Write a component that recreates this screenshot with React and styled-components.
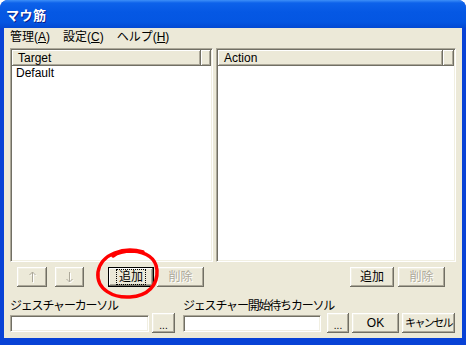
import React from 'react';
import styled, { createGlobalStyle, css } from 'styled-components';

const Global = createGlobalStyle`
  html, body { margin: 0; padding: 0; background: #fff; }
  body {
    width: 466px; height: 345px; overflow: hidden;
    font-family: "Liberation Sans", "Noto Sans CJK JP", sans-serif;
    font-size: 12px; color: #000;
  }
`;

const Window = styled.div`
  position: relative;
  width: 466px;
  height: 345px;
  display: flex;
  flex-direction: column;
  background: #0842d6;
  border-radius: 8px 8px 0 0;
  overflow: hidden;
`;

const TitleBar = styled.div`
  height: 28px;
  flex: none;
  display: flex;
  align-items: center;
  padding-left: 6px;
  background: linear-gradient(to bottom, #3d8ff8 0px, #0d62ea 3px, #0558e4 12px, #0456e2 22px, #0349d3 28px);
  color: #fff;
  font-weight: bold;
  font-size: 13px;
  text-shadow: 1px 1px 0 #0a1e8a;
  font-family: "Noto Sans CJK JP", sans-serif;
  letter-spacing: 0.5px;
`;

const Body = styled.div`
  flex: 1;
  margin: 0 4px 7px 4px;
  background: #ece9d8;
  display: flex;
  flex-direction: column;
  padding: 0 6px 5px 6px;
`;

const MenuBar = styled.div`
  height: 18px;
  display: flex;
  align-items: center;
  margin-left: -6px;
`;

const MenuItem = styled.span`
  padding: 0 7px 0 6px;
  line-height: 18px;
  u { text-decoration: underline; }
`;

const Panes = styled.div`
  margin-top: 2px;
  height: 214px;
  display: grid;
  grid-template-columns: 203px 240px;
  column-gap: 3px;
`;

const ListBox = styled.div`
  background: #fff;
  border-style: solid;
  border-width: 1px;
  border-color: #aca899 #fff #fff #aca899;
  box-shadow: inset 1px 1px #716f64, inset -1px -1px #f1efe2;
  padding: 1px;
  display: flex;
  flex-direction: column;
`;

const Header = styled.div`
  display: flex;
  height: 16px;
  flex: none;
`;

const HeaderCell = styled.div`
  ${({ $w }) => ($w ? css`width: ${$w}px;` : css`flex: 1;`)}
  background: #ece9d8;
  box-shadow: inset -1px -1px #716f64, inset 1px 1px #fff, inset -2px -2px #aca899;
  padding-left: 6px;
  line-height: 16px;
`;

const Row = styled.div`
  height: 14px;
  line-height: 14px;
  padding-left: 4px;
`;

const ButtonRow = styled.div`
  margin-top: 5px;
  height: 20px;
  display: grid;
  grid-template-columns: 203px 240px;
  column-gap: 3px;
`;

const BtnGroup = styled.div`
  display: flex;
  justify-content: ${({ $end }) => ($end ? 'flex-end' : 'flex-start')};
  padding-right: ${({ $end }) => ($end ? '11px' : '0')};
`;

const Button = styled.div`
  width: ${({ $w }) => $w}px;
  height: ${({ $h }) => $h || 20}px;
  margin-left: ${({ $ml }) => $ml || 0}px;
  flex: none;
  box-sizing: border-box;
  background: #ece9d8;
  display: flex;
  align-items: center;
  justify-content: center;
  white-space: nowrap;
  box-shadow: inset -1px -1px #716f64, inset 1px 1px #fff, inset -2px -2px #aca899, inset 2px 2px #f1efe2;
  line-height: 1;
  ${({ $disabled }) =>
    $disabled &&
    css`
      color: #aca899;
      text-shadow: 1px 1px 0 #fff;
    `}
  ${({ $focused }) =>
    $focused &&
    css`
      box-shadow: inset 0 0 0 1px #000, inset -2px -2px #716f64, inset 2px 2px #fff, inset -3px -3px #aca899;
    `}
`;

const ArrowSvg = styled.svg`
  display: block;
  overflow: visible;
`;

function Arrow({ down }) {
  const d = down ? 'M4.5 1 V11 M1.5 8 L4.5 11 L7.5 8' : 'M4.5 1 V11 M1.5 4 L4.5 1 L7.5 4';
  return (
    <ArrowSvg width="9" height="12" viewBox="0 0 9 12">
      <path d={d} transform="translate(1 1)" fill="none" stroke="#fff" strokeWidth="1" />
      <path d={d} fill="none" stroke="#aca899" strokeWidth="1" />
    </ArrowSvg>
  );
}

const FocusRect = styled.span`
  border: 1px dotted #000;
  padding: 1px 2px;
  line-height: 12px;
`;

const Dots = styled.span`
  font-size: 10px;
  margin-top: 6px;
  letter-spacing: 0;
`;

const Bottom = styled.div`
  margin-top: 13px;
  display: flex;
  align-items: flex-end;
`;

const Field = styled.div`
  display: flex;
  flex-direction: column;
  margin-right: ${({ $mr }) => $mr}px;
`;

const Label = styled.div`
  height: 13px;
  line-height: 13px;
  white-space: nowrap;
  letter-spacing: -1.2px;
`;

const Controls = styled.div`
  display: flex;
  align-items: center;
  height: 20px;
  gap: ${({ $gap }) => $gap}px;
`;

const Input = styled.div`
  width: ${({ $w }) => $w}px;
  height: 17px;
  box-sizing: border-box;
  background: #fff;
  border-style: solid;
  border-width: 1px;
  border-color: #aca899 #fff #fff #aca899;
  box-shadow: inset 1px 1px #716f64, inset -1px -1px #f1efe2;
`;

const Overlay = styled.svg`
  position: absolute;
  left: 0;
  top: 0;
  pointer-events: none;
`;

const Kana = styled.span`
  font-size: 11px;
  letter-spacing: -1.6px;
`;

export default function App() {
  return (
    <>
      <Global />
      <Window>
        <TitleBar>マウ筋</TitleBar>
        <Body>
          <MenuBar>
            <MenuItem>管理(<u>A</u>)</MenuItem>
            <MenuItem>設定(<u>C</u>)</MenuItem>
            <MenuItem>ヘルプ(<u>H</u>)</MenuItem>
          </MenuBar>
          <Panes>
            <ListBox>
              <Header>
                <HeaderCell $w={183}>Target</HeaderCell>
                <HeaderCell />
              </Header>
              <Row>Default</Row>
            </ListBox>
            <ListBox>
              <Header>
                <HeaderCell $w={219}>Action</HeaderCell>
                <HeaderCell />
              </Header>
            </ListBox>
          </Panes>
          <ButtonRow>
            <BtnGroup>
              <Button $w={30} $ml={7} $disabled><Arrow /></Button>
              <Button $w={29} $ml={8} $disabled><Arrow down /></Button>
              <Button $w={46} $ml={24} $focused><FocusRect>追加</FocusRect></Button>
              <Button $w={47} $ml={3} $disabled>削除</Button>
            </BtnGroup>
            <BtnGroup $end>
              <Button $w={44}>追加</Button>
              <Button $w={47} $ml={4} $disabled>削除</Button>
            </BtnGroup>
          </ButtonRow>
          <Bottom>
            <Field $mr={8}>
              <Label>ジェスチャーカーソル</Label>
              <Controls $gap={3}>
                <Input $w={139} />
                <Button $w={23}><Dots>...</Dots></Button>
              </Controls>
            </Field>
            <Field $mr={3}>
              <Label>ジェスチャー開始待ちカーソル</Label>
              <Controls $gap={6}>
                <Input $w={138} />
                <Button $w={22}><Dots>...</Dots></Button>
              </Controls>
            </Field>
            <Button $w={47}>OK</Button>
            <Button $w={53} $ml={3}><Kana>キャンセル</Kana></Button>
          </Bottom>
        </Body>
        <Overlay width="466" height="345" viewBox="0 0 466 345">
          <path
            d="M143 252 C124 246 101 254 98 272 C96 290 114 298 130 297 C148 296 158 285 157 270 C156 258 146 252 132 251 C124 251 117 253 113 256"
            fill="none"
            stroke="#f00"
            strokeWidth="3.5"
            strokeLinecap="round"
          />
        </Overlay>
      </Window>
    </>
  );
}
